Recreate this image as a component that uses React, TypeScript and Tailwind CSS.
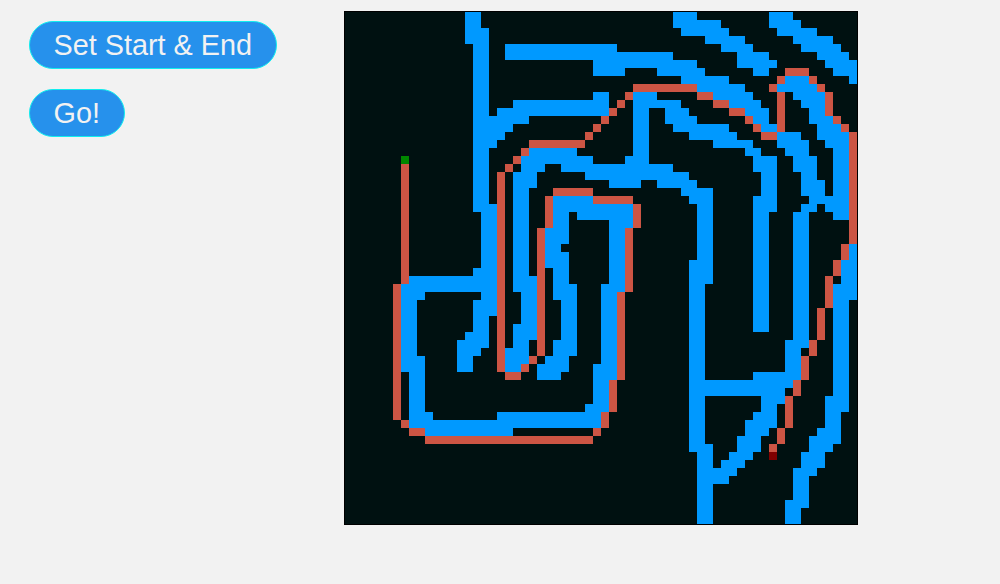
type Kind = 'wall' | 'path' | 'start' | 'end'

const kindClass: Record<Kind, string> = {
  wall: 'bg-[#0099ff]',
  path: 'bg-[#cc5544]',
  start: 'bg-[#008800]',
  end: 'bg-[#800000]',
}

const kindOf: Record<string, Kind> = { r: 'path', s: 'start', e: 'end' }

// One entry per board row (64 in all). Each run is "from-to" in columns, `to`
// exclusive. No prefix = wall, r = path, s = start, e = end.
const rows: string[] = [
  '15-17 41-44 53-56',
  '15-17 41-47 53-57',
  '15-18 42-48 54-59',
  '15-18 45-50 56-61',
  '16-18 20-34 47-51 57-62',
  '16-18 20-41 49-53 59-63',
  '16-18 31-44 49-54 60-64',
  '16-18 31-35 39-45 51-53 r55-58 61-64',
  '16-18 42-48 r54-55 55-58 r58-59 63-64',
  '16-18 r36-44 44-50 r53-54 54-59 r59-60',
  '16-18 31-33 r35-36 36-39 r44-46 46-51 r54-55 56-60 r60-61',
  '16-18 21-33 r34-35 36-42 r46-48 48-52 r54-55 57-60 r60-61',
  '16-18 19-33 r33-34 36-38 40-43 r48-50 50-53 r54-55 58-60 r60-61',
  '16-23 r32-33 36-38 40-44 r50-51 51-53 r54-55 58-61 r61-62',
  '16-21 r31-32 36-38 41-48 r51-52 52-54 r54-55 59-62 r62-63',
  '16-20 r30-31 36-38 43-49 r52-54 54-57 59-63 r63-64',
  '16-19 r23-30 36-38 46-51 54-58 60-63 r63-64',
  '16-18 r22-23 23-29 36-38 50-52 55-58 61-63 r63-64',
  's7-8 16-18 r21-22 22-31 35-38 51-54 56-59 61-63 r63-64',
  'r7-8 16-18 r20-21 22-25 27-41 51-54 56-59 61-63 r63-64',
  'r7-8 16-18 r19-20 21-24 30-43 52-54 57-59 61-63 r63-64',
  'r7-8 16-18 r19-20 21-24 33-37 39-44 52-54 57-60 61-63 r63-64',
  'r7-8 16-18 r19-20 21-23 r26-31 42-46 52-54 57-60 61-63 r63-64',
  'r7-8 16-18 r19-20 21-23 r25-26 26-31 r31-36 43-46 51-54 58-63 r63-64',
  'r7-8 16-19 r19-20 21-23 r25-26 26-36 r36-37 44-46 51-54 57-59 60-63 r63-64',
  'r7-8 17-19 r19-20 21-23 r25-26 26-28 29-36 r36-37 44-46 51-53 56-58 61-63 r63-64',
  'r7-8 17-19 r19-20 21-23 r25-26 26-28 33-36 r36-37 44-46 51-53 56-58 r63-64',
  'r7-8 17-19 r19-20 21-23 r24-25 25-28 33-35 r35-36 44-46 51-53 56-58 r63-64',
  'r7-8 17-19 r19-20 21-23 r24-25 25-28 33-35 r35-36 44-46 51-53 56-58 r63-64',
  'r7-8 17-19 r19-20 21-23 r24-25 25-27 33-35 r35-36 44-46 51-53 56-58 r62-63 63-64',
  'r7-8 17-19 r19-20 21-23 r24-25 25-28 33-35 r35-36 44-46 51-53 56-58 r62-63 63-64',
  'r7-8 17-19 r19-20 21-23 r24-25 25-28 33-35 r35-36 43-46 51-53 56-58 r61-62 62-64',
  'r7-8 16-19 r19-20 21-23 r24-25 26-28 33-35 r35-36 43-46 51-53 56-58 r61-62 62-64',
  'r7-8 8-19 r19-20 21-24 r24-25 26-28 33-35 r35-36 43-46 51-53 56-58 r60-61 62-64',
  'r6-7 7-19 r19-20 21-24 r24-25 26-29 32-35 r35-36 43-45 51-53 56-58 r60-61 61-64',
  'r6-7 7-10 17-19 r19-20 22-24 r24-25 26-29 32-34 r34-35 43-45 51-53 56-58 r60-61 61-64',
  'r6-7 7-9 16-19 r19-20 22-24 r24-25 27-29 32-34 r34-35 43-45 51-53 56-58 r60-61 61-63',
  'r6-7 7-9 16-19 r19-20 22-24 r24-25 27-29 32-34 r34-35 43-45 51-53 56-58 r59-60 61-63',
  'r6-7 7-9 16-18 r19-20 22-24 r24-25 27-29 32-34 r34-35 43-45 51-53 56-58 r59-60 61-63',
  'r6-7 7-9 16-18 r19-20 21-24 r24-25 27-29 32-34 r34-35 43-45 51-53 56-58 r59-60 61-63',
  'r6-7 7-9 15-18 r19-20 21-24 r24-25 27-29 32-34 r34-35 43-45 56-58 r59-60 61-63',
  'r6-7 7-9 14-18 r19-20 21-23 r24-25 26-29 32-34 r34-35 43-45 55-58 r58-59 61-63',
  'r6-7 7-9 14-17 r19-20 20-23 r24-25 26-29 32-34 r34-35 43-45 55-57 r58-59 61-63',
  'r6-7 7-10 14-16 r19-20 20-23 r23-24 25-28 32-34 r34-35 43-45 55-57 r57-58 61-63',
  'r6-7 7-10 14-16 r19-20 20-22 r22-23 24-28 31-34 r34-35 43-45 55-57 r57-58 61-63',
  'r6-7 8-10 r20-22 24-27 31-34 r34-35 43-45 51-57 r57-58 61-63',
  'r6-7 8-10 31-33 r33-34 43-56 r56-57 61-63',
  'r6-7 8-10 31-33 r33-34 43-55 r56-57 61-63',
  'r6-7 8-10 31-33 r33-34 43-45 52-55 r55-56 60-63',
  'r6-7 8-10 30-33 r33-34 43-45 52-54 r55-56 60-63',
  'r6-7 8-11 19-32 r32-33 43-45 51-54 r55-56 60-62',
  'r7-8 8-32 r32-33 43-45 50-54 r55-56 60-62',
  'r8-10 10-21 r31-32 43-45 50-53 r54-55 59-62',
  'r10-31 43-45 49-52 r54-55 58-62',
  '43-46 49-52 r53-54 58-61',
  '44-46 48-51 e53-54 57-60',
  '44-46 47-50 57-60',
  '44-49 56-59',
  '44-48 56-58',
  '44-46 56-58',
  '44-46 56-58',
  '44-46 55-58',
  '44-46 55-57',
  '44-46 55-57',
]

const runs = rows.flatMap((row, y) =>
  row.split(' ').map((token) => {
    const kind: Kind = kindOf[token[0]] ?? 'wall'
    const [from, to] = token.replace(/^[rse]/, '').split('-').map(Number)
    return { kind, from, to, y }
  }),
)

function Board() {
  return (
    <div className="grid shrink-0 grid-cols-[repeat(64,8px)] grid-rows-[repeat(64,8px)] border border-black bg-[#001111]">
      {runs.map(({ kind, from, to, y }) => (
        <div
          key={`${y}-${from}`}
          className={kindClass[kind]}
          style={{ gridRow: y + 1, gridColumn: `${from + 1} / ${to + 1}` }}
        />
      ))}
    </div>
  )
}

function PillButton({ label }: { label: string }) {
  return (
    <button
      type="button"
      className="h-12 whitespace-nowrap rounded-full border border-[#11eeee] bg-[#2691ec] pl-[23.5px] pr-6 text-[28.8px] leading-[46px] text-[#f2f2f2]"
    >
      {label}
    </button>
  )
}

export default function App() {
  return (
    <main className="flex h-screen items-start overflow-hidden bg-[#f2f2f2] pt-[11px] font-['Liberation_Sans',Arial,sans-serif]">
      <div className="flex w-[344px] shrink-0 flex-col items-start gap-5 pl-[29px] pt-2.5">
        <PillButton label="Set Start & End" />
        <PillButton label="Go!" />
      </div>
      <Board />
    </main>
  )
}
